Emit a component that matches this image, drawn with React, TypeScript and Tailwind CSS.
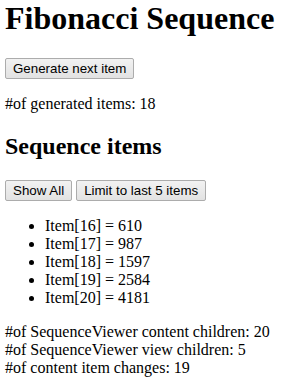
import React from "react";

function Btn({ children }: { children: React.ReactNode }) {
  return (
    <button
      type="button"
      className="inline-block h-[21px] px-[7px] border border-[#acacac] rounded-[2px] bg-gradient-to-b from-[#f2f2f2] to-[#e2e2e2] text-black text-[13.33px] leading-[15px] font-['Arial','Liberation_Sans',sans-serif] align-baseline"
    >
      {children}
    </button>
  );
}

export default function App() {
  const items = [
    [16, 610],
    [17, 987],
    [18, 1597],
    [19, 2584],
    [20, 4181],
  ];
  return (
    <div className="bg-white min-h-[384px] px-[5px] font-['Times_New_Roman','Liberation_Serif',serif] text-black text-[16px] leading-[normal]">
      <h1 className="text-[32px] font-bold mt-0 mb-[21.44px]">Fibonacci Sequence</h1>
      <div>
        <Btn>Generate next item</Btn>
      </div>
      <p className="my-4">#of generated items: 18</p>
      <h2 className="text-[24px] font-bold my-[19.92px]">Sequence items</h2>
      <div>
        <Btn>Show All</Btn> <Btn>Limit to last 5 items</Btn>
      </div>
      <ul className="list-disc pl-10 my-4">
        {items.map(([i, v]) => (
          <li key={i}>
            Item[{i}] = {v}
          </li>
        ))}
      </ul>
      <div>#of SequenceViewer content children: 20</div>
      <div>#of SequenceViewer view children: 5</div>
      <div>#of content item changes: 19</div>
    </div>
  );
}
